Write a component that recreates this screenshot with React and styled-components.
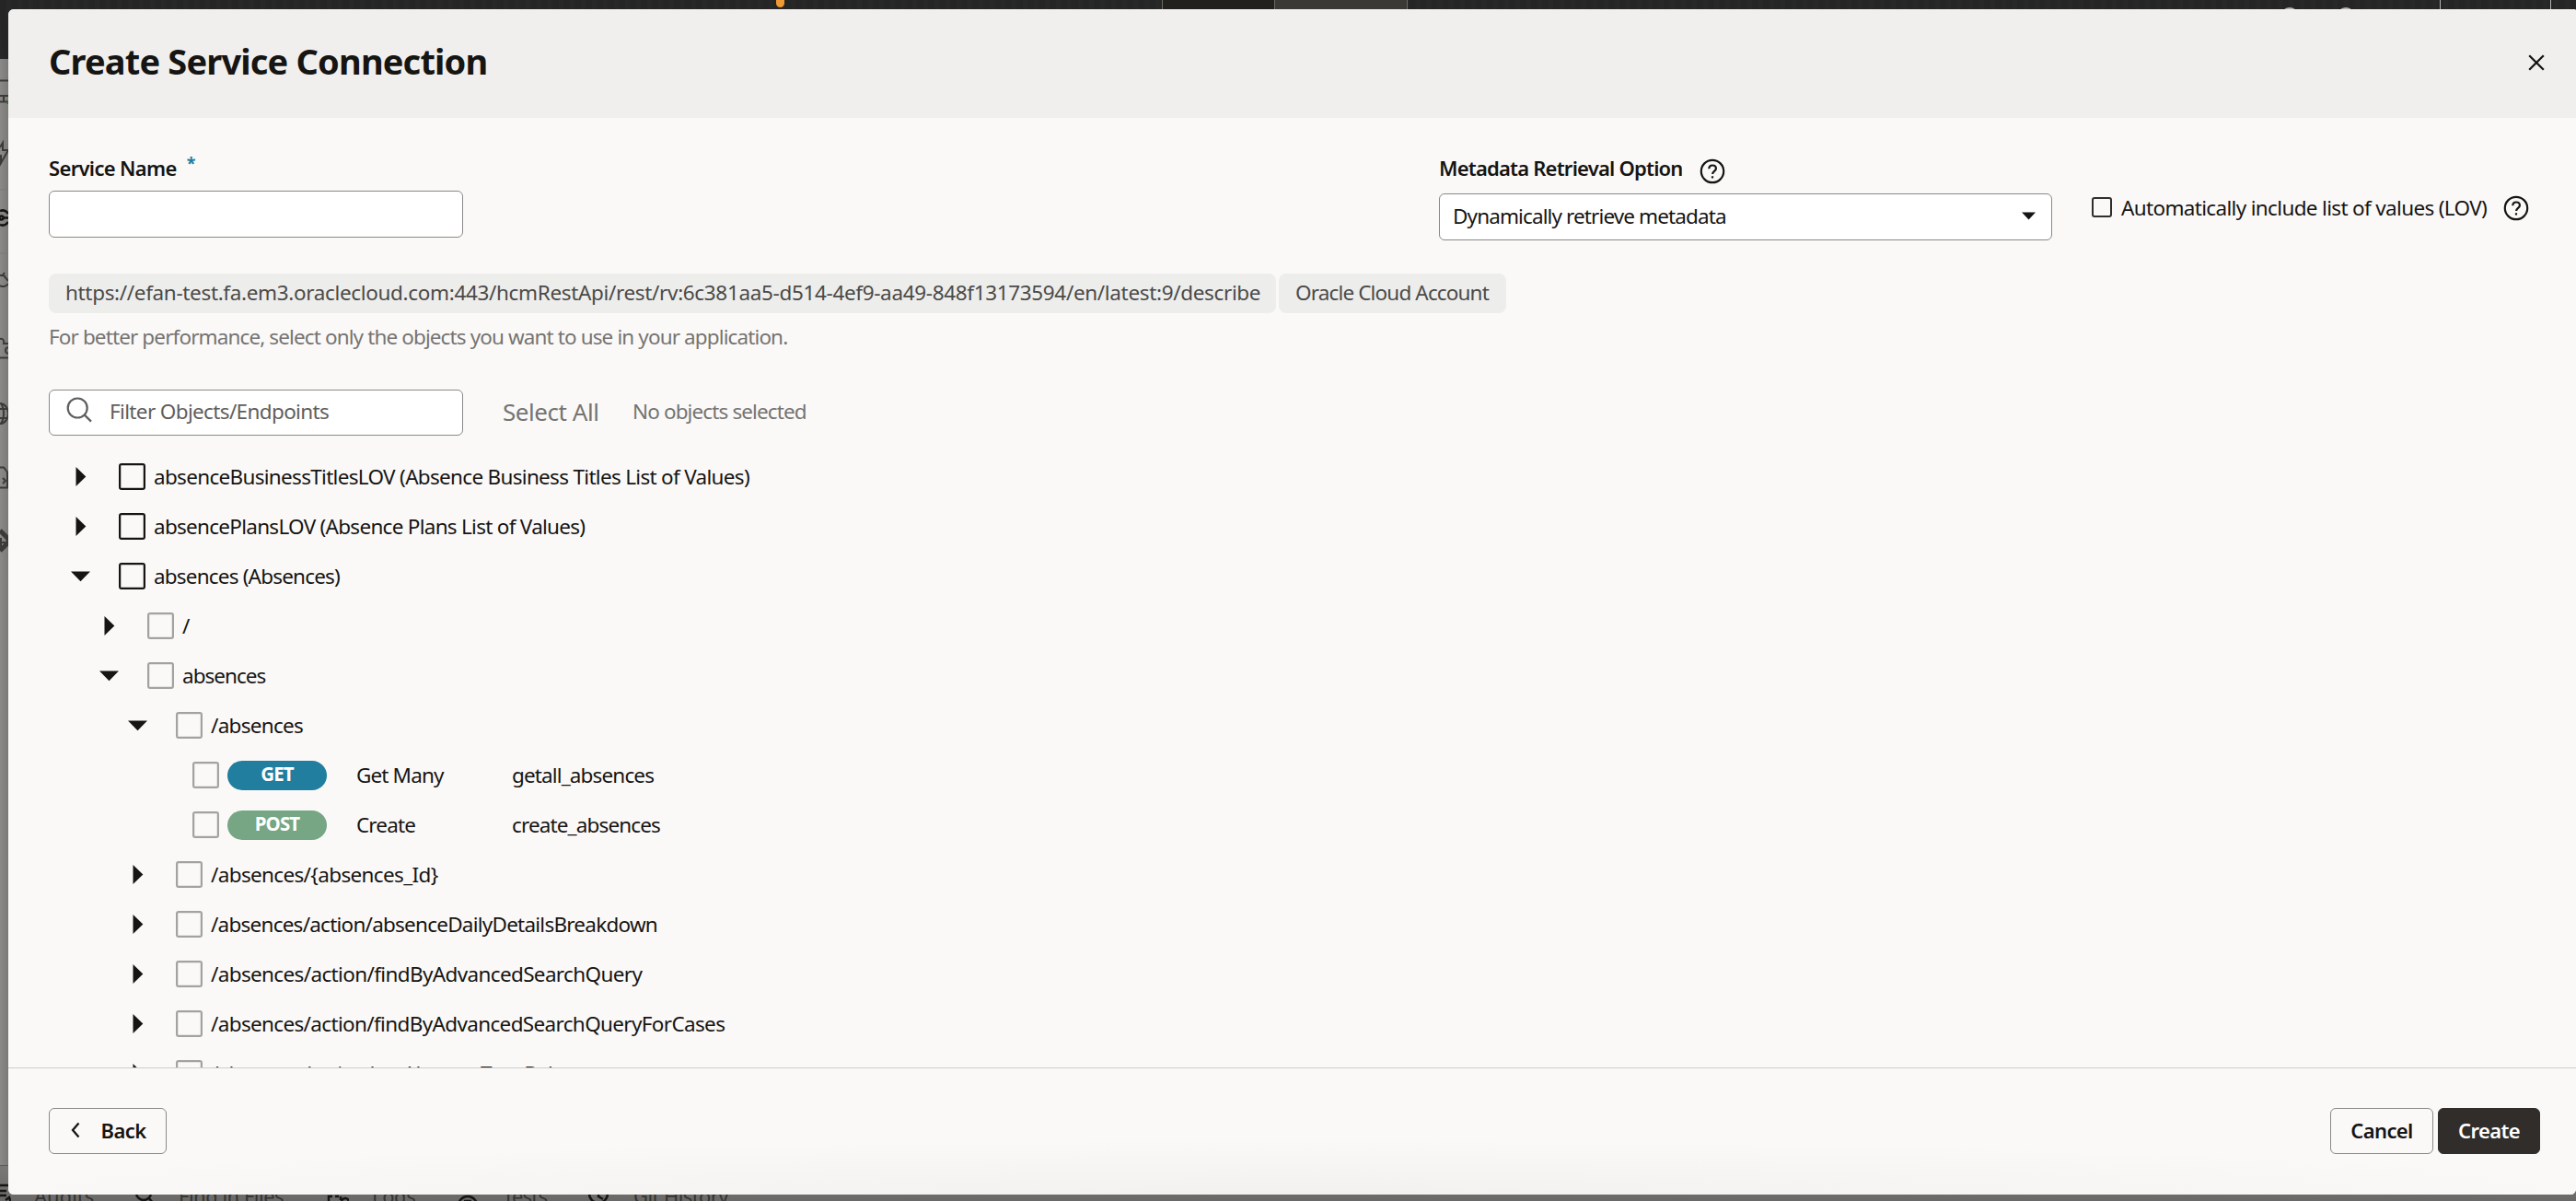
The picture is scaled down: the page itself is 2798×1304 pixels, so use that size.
import React from 'react';
import styled, { createGlobalStyle } from 'styled-components';

const GlobalStyle = createGlobalStyle`
  * {
    box-sizing: border-box;
  }

  body {
    margin: 0;
    font-family: 'Noto Sans', 'Open Sans', sans-serif;
    font-size: 22px;
    color: #161513;
  }
`;

const Page = styled.div`
  position: relative;
  width: 2798px;
  height: 1304px;
  overflow: hidden;
  display: grid;
  grid-template-rows: 64px 1fr 39px;
  background: #8a8886;
`;

/* application behind the dialog */

const TopBar = styled.div`
  display: flex;
  align-items: flex-start;
  background: repeating-radial-gradient(ellipse 60px 40px at 50% 0, #252525 0 6px, #282828 8px 12px);
`;

const TopBarGap = styled.div`
  width: ${props => props.$w}px;
`;

const StatusDot = styled.div`
  width: 9px;
  height: 14px;
  margin-top: -6px;
  border-radius: 5px;
  background: #f09a35;
`;

const TopBarTab = styled.div`
  width: ${props => props.$w}px;
  height: 64px;
  border-left: 1px solid ${props => props.$line || '#6b6a68'};
  background: ${props => props.$bg || 'transparent'};
`;

const TopBarIcon = styled.div`
  width: 20px;
  height: 20px;
  margin-top: 8px;
  border: 2px solid #b5b4b2;
  border-radius: 50%;
`;

const Rail = styled.div`
  width: 9px;
  background: linear-gradient(90deg, #8b8987, #7b7977);
  overflow: hidden;
`;

const BottomTabs = styled.div`
  display: flex;
  align-items: flex-start;
  padding-top: 17px;
  border-top: 1px solid #5c5a59;
  background: linear-gradient(#7a7876, #6b6967);
  color: #343331;
  line-height: 30px;
`;

const BottomTab = styled.div`
  display: flex;
  align-items: center;
  gap: ${props => props.$gap}px;
  width: ${props => props.$w}px;
  letter-spacing: ${props => props.$ls || 0}px;
  white-space: nowrap;
`;

/* dialog */

const Dialog = styled.div`
  position: absolute;
  top: 10px;
  left: 9px;
  width: 2789px;
  height: 1287px;
  display: flex;
  flex-direction: column;
  border-radius: 6px 2px 6px 6px;
  background: #fbf9f8;
  overflow: hidden;
`;

const Header = styled.div`
  display: flex;
  align-items: flex-start;
  justify-content: space-between;
  height: 118px;
  padding: 26px 34px 0 44px;
  background: #f0efed;
`;

const Title = styled.h1`
  margin: 0;
  font-size: 38px;
  line-height: 60px;
  font-weight: 700;
  letter-spacing: -0.83px;
`;

const CloseIcon = styled.svg`
  display: block;
  width: 18px;
  height: 18px;
  margin-top: 23px;
`;

const Body = styled.div`
  flex: 1;
  min-height: 0;
  padding: 42px 44px 0;
  overflow: hidden;
`;

const FormRow = styled.div`
  display: flex;
  align-items: flex-start;
  height: 127px;
`;

const Field = styled.div`
  width: ${props => props.$w}px;
  margin-right: ${props => props.$mr || 0}px;
`;

const LabelRow = styled.div`
  display: flex;
  align-items: flex-start;
  height: ${props => props.$h}px;
`;

const Label = styled.label`
  font-weight: 600;
  line-height: 25px;
  letter-spacing: ${props => props.$ls}px;
  white-space: nowrap;
`;

const Required = styled.span`
  margin-left: 11px;
  color: #227e9e;
  font-size: 18px;
  font-weight: 700;
  line-height: 15px;
`;

const TextInput = styled.input`
  display: block;
  width: 450px;
  height: 51px;
  border: 1px solid #8b8987;
  border-radius: 6px;
  background: #fff;
  outline: none;
`;

const SelectBox = styled.div`
  display: flex;
  align-items: center;
  justify-content: space-between;
  height: 51px;
  padding: 0 17px 3px 14px;
  border: 1px solid #8b8987;
  border-radius: 6px;
  background: #fff;
`;

const Text = styled.span`
  display: block;
  color: ${props => props.$color || '#161513'};
  font-size: ${props => props.$size || 22.5}px;
  letter-spacing: ${props => props.$ls}px;
  white-space: nowrap;
`;

const LovOption = styled.div`
  display: flex;
  align-items: center;
  height: 32px;
  margin-top: 39px;
`;

const SmallCheckbox = styled.span`
  width: 22px;
  height: 22px;
  margin: 0 10px 0 0;
  border: 2px solid #312d2a;
  border-radius: 3px;
`;

const Help = styled.svg`
  display: block;
  width: 28px;
  height: 28px;
  margin: 2px 0 0 ${props => props.$ml}px;
`;

const Chips = styled.div`
  display: flex;
  gap: 3px;
`;

const Chip = styled.div`
  display: flex;
  align-items: center;
  width: ${props => props.$w}px;
  height: 43px;
  padding: 0 0 3px 18px;
  border-radius: 8px;
  background: #ededec;
`;

const Hint = styled.div`
  height: 73px;
  margin-top: 10px;
  line-height: 32px;
`;

const Toolbar = styled.div`
  display: flex;
  align-items: center;
  height: 50px;
`;

const FilterBox = styled.div`
  display: flex;
  align-items: center;
  width: 450px;
  height: 50px;
  margin-right: 43px;
  padding: 0 0 3px 18px;
  border: 1px solid #8b8987;
  border-radius: 6px;
  background: #fff;
`;

const SearchIcon = styled.svg`
  width: 28px;
  height: 28px;
  margin: -3px 19px 0 0;
`;

const SelectAll = styled.div`
  width: 141px;
  padding-bottom: 3px;
`;

const SelectionCount = styled.div`
  padding-bottom: 3px;
`;

const Tree = styled.div`
  margin-top: 17px;
`;

const Row = styled.div`
  display: flex;
  align-items: center;
  height: 54px;
  padding-left: ${props => props.$indent}px;
`;

const Toggle = styled.svg`
  flex: none;
  width: 24px;
  height: 24px;
  margin-right: 30px;
`;

const Checkbox = styled.span`
  flex: none;
  width: 29px;
  height: 29px;
  margin-right: 9px;
  border: 2px solid ${props => (props.$muted ? '#a3a2a0' : '#161513')};
  border-radius: 3px;
  box-shadow: inset 0 0 0 0.5px ${props => (props.$muted ? '#cfcecc' : '#8b8987')};
`;

const Badge = styled.span`
  flex: none;
  width: 108px;
  height: 32px;
  margin: 1px 32px 0 0;
  border-radius: 16px;
  background: ${props => props.$bg};
  color: #fff;
  font-size: 20.5px;
  font-weight: 700;
  line-height: 29px;
  letter-spacing: ${props => props.$ls}px;
  text-align: center;
`;

const OperationName = styled.div`
  width: 169px;
`;

const Footer = styled.div`
  display: flex;
  align-items: flex-start;
  height: 138px;
  padding: 43px 39px 0 44px;
  border-top: 1px solid #cfcecc;
  background: radial-gradient(ellipse 1500px 60px at 50% 100%, #f2f1ef, #f2f1ef00) no-repeat, #fbf9f8;
`;

const Button = styled.button`
  display: flex;
  align-items: center;
  justify-content: center;
  width: ${props => props.$w}px;
  height: 50px;
  margin: 0 0 0 ${props => props.$ml || '0'};
  padding: 0 0 2px;
  border: 1px solid ${props => (props.$primary ? '#312d2a' : '#8b8987')};
  border-radius: 6px;
  background: ${props => (props.$primary ? '#312d2a' : 'transparent')};
  color: ${props => (props.$primary ? '#fff' : '#161513')};
  font-family: inherit;
  font-size: 22px;
  font-weight: 600;
  letter-spacing: ${props => props.$ls}px;
`;

const Chevron = styled.svg`
  width: 12px;
  height: 18px;
  margin-right: 22px;
`;

const HelpIcon = ({ ml }) => (
  <Help viewBox="0 0 28 28" fill="none" stroke="#161513" strokeWidth="2.2" $ml={ml}>
    <circle cx="14" cy="14" r="12.2" />
    <path d="M10.3 11.2c0-2.2 1.6-3.7 3.8-3.7s3.8 1.4 3.8 3.4c0 2.9-3.8 3-3.8 6.1" />
    <path d="M14 19.2v2.4" />
  </Help>
);

const TreeToggle = ({ open }) => (
  <Toggle viewBox="0 0 24 24" fill="#161513">
    {open ? <path d="M2 7.5h21L12.500 18.300z" /> : <path d="M7.500 2v21l10.800-10.500z" />}
  </Toggle>
);

const rows = [
  { level: 0, label: 'absenceBusinessTitlesLOV (Absence Business Titles List of Values)', ls: -0.69 },
  { level: 0, label: 'absencePlansLOV (Absence Plans List of Values)', ls: -0.72 },
  { level: 0, open: true, label: 'absences (Absences)', ls: -0.81 },
  { level: 1, label: '/', ls: 0 },
  { level: 1, open: true, label: 'absences', ls: -0.97 },
  { level: 2, open: true, label: '/absences', ls: -0.7 },
  { method: 'GET', color: '#227e9e', badgeLs: -0.9, name: 'Get Many', id: 'getall_absences', ls: -0.86 },
  { method: 'POST', color: '#76a684', badgeLs: -0.9, name: 'Create', id: 'create_absences', ls: -0.86 },
  { level: 2, label: '/absences/{absences_Id}', ls: -0.65 },
  { level: 2, label: '/absences/action/absenceDailyDetailsBreakdown', ls: -0.76 },
  { level: 2, label: '/absences/action/findByAdvancedSearchQuery', ls: -0.64 },
  { level: 2, label: '/absences/action/findByAdvancedSearchQueryForCases', ls: -0.65 },
  { level: 2, label: '/absences/action/getAbsenceTypeBalance', ls: -0.7 },
];

const TreeRow = ({ level, open, label, ls }) => (
  <Row $indent={22 + level * 31}>
    <TreeToggle open={open} />
    <Checkbox $muted={level > 0} />
    <Text $ls={ls}>{label}</Text>
  </Row>
);

const OperationRow = ({ method, color, badgeLs, name, id, ls }) => (
  <Row $indent={156}>
    <Checkbox $muted />
    <Badge $bg={color} $ls={badgeLs}>{method}</Badge>
    <OperationName>
      <Text $ls={ls}>{name}</Text>
    </OperationName>
    <Text $ls={ls}>{id}</Text>
  </Row>
);

const RailIcons = () => (
  <svg width="9" height="1201" viewBox="0 64 9 1201" fill="none" stroke="#3b3a38" strokeWidth="2">
    <path d="M0 87.500h9" />
    <path d="M0 104h9M0 110.500h9M4 104v6" />
    <path d="M8.500 109v4" stroke="#2f6b2f" />
    <path d="M0 160l3-5v8h6l-8 14v-9" />
    <path d="M0 206h9M0 275h9" stroke="#7b7977" strokeWidth="1" />
    <g stroke="#161513" strokeWidth="2.500">
      <path d="M0 229c4-1.500 7 0 9 3M0 244c4 1.500 7 0 9-3M3 236.500h6" />
      <circle cx="1.500" cy="236.500" r="2" />
    </g>
    <path d="M0 299l4 0 5 6M5 296l-3 4M0 310c3 2 7 1 9-2" />
    <path d="M0 368c3-1 5 2 4 5h5M9 377c-4 1-4 6 0 7M0 388.500h9" />
    <path d="M0 438c5 0 9 5 9 11s-4 11-9 11M0 444h8M0 454h8M1 438c4 6 4 16 0 22" />
    <path d="M0 507.500h4l4 5v17M0 529.500h9M3 519l3 3-3 3" />
    <path d="M0 576l9 9v4l-9 9" strokeWidth="5" />
    <path d="M1 584v10M1 589h5" />
  </svg>
);

const App = () => (
  <>
    <GlobalStyle />
    <Page>
      <TopBar>
        <TopBarGap $w={843} />
        <StatusDot />
        <TopBarGap $w={410} />
        <TopBarTab $w={122} $bg="#22211e" />
        <TopBarTab $w={144} $bg="#3a3936" />
        <TopBarTab $w={949} />
        <TopBarIcon />
        <TopBarGap $w={41} />
        <TopBarIcon />
        <TopBarGap $w={92} />
        <TopBarTab $w={120} $line="#b5b4b2" />
        <TopBarTab $w={28} $line="#b5b4b2" />
      </TopBar>
      <Rail>
        <RailIcons />
      </Rail>
      <BottomTabs>
        <BottomTab $w={146} $gap={25}>
          <svg width="12" height="30" fill="none" stroke="#161513" strokeWidth="2.500">
            <path d="M0 4h9M0 10h7M0 15h7M6 20l4-3 2 6" />
          </svg>
          Audits
        </BottomTab>
        <BottomTab $w={209} $gap={26} $ls={-0.5}>
          <svg width="22" height="30" fill="none" stroke="#161513" strokeWidth="2.500">
            <circle cx="10" cy="12" r="8" />
            <path d="M15 17l6 7" />
          </svg>
          Find in Files
        </BottomTab>
        <BottomTab $w={141} $gap={25} $ls={-0.4}>
          <svg width="24" height="30" fill="none" stroke="#161513" strokeWidth="2.500">
            <path d="M2 26V16h4M9 16h4M15 16v4" />
            <circle cx="20" cy="22" r="4" />
          </svg>
          Logs
        </BottomTab>
        <BottomTab $w={142} $gap={26} $ls={-0.8}>
          <svg width="24" height="30" fill="none" stroke="#161513" strokeWidth="2.500">
            <circle cx="12" cy="26" r="10" />
            <path d="M8 21h8" />
          </svg>
          Tests
        </BottomTab>
        <BottomTab $w={170} $gap={26} $ls={-0.6}>
          <svg width="24" height="30" fill="none" stroke="#161513" strokeWidth="2.500">
            <circle cx="12" cy="13" r="10" />
            <path d="M12 6v10l5 3" />
          </svg>
          Git History
        </BottomTab>
      </BottomTabs>

      <Dialog>
        <Header>
          <Title>Create Service Connection</Title>
          <CloseIcon viewBox="0 0 18 18" stroke="#161513" strokeWidth="2.300">
            <path d="M1.200 1.200l15.600 15.600M16.800 1.200L1.200 16.800" />
          </CloseIcon>
        </Header>

        <Body>
          <FormRow>
            <Field $w={450} $mr={1060}>
              <LabelRow $h={37}>
                <Label $ls={-0.67}>Service Name</Label>
                <Required>*</Required>
              </LabelRow>
              <TextInput />
            </Field>
            <Field $w={666} $mr={43}>
              <LabelRow $h={40}>
                <Label $ls={-0.78}>Metadata Retrieval Option</Label>
                <HelpIcon ml={18} />
              </LabelRow>
              <SelectBox>
                <Text $ls={-0.88}>Dynamically retrieve metadata</Text>
                <svg width="15" height="9" fill="#161513">
                  <path d="M0 0.500h15L7.500 8.500z" />
                </svg>
              </SelectBox>
            </Field>
            <LovOption>
              <SmallCheckbox />
              <Text $ls={-0.66}>Automatically include list of values (LOV)</Text>
              <HelpIcon ml={18} />
            </LovOption>
          </FormRow>

          <Chips>
            <Chip $w={1333}>
              <Text $color="#4b4a48" $ls={-0.34}>
                https://efan-test.fa.em3.oraclecloud.com:443/hcmRestApi/rest/rv:6c381aa5-d514-4ef9-aa49-848f13173594/en/latest:9/describe
              </Text>
            </Chip>
            <Chip $w={247}>
              <Text $color="#4b4a48" $ls={-0.85}>Oracle Cloud Account</Text>
            </Chip>
          </Chips>
          <Hint>
            <Text $color="#757472" $ls={-0.88}>
              For better performance, select only the objects you want to use in your application.
            </Text>
          </Hint>

          <Toolbar>
            <FilterBox>
              <SearchIcon viewBox="0 0 28 28" fill="none" stroke="#5f5e5c" strokeWidth="2.200">
                <circle cx="12.200" cy="12" r="10.500" />
                <path d="M19.600 19.400l7.400 7.200" />
              </SearchIcon>
              <Text $color="#5f5e5c" $ls={-0.64}>Filter Objects/Endpoints</Text>
            </FilterBox>
            <SelectAll>
              <Text $color="#757472" $size={26} $ls={-0.45}>Select All</Text>
            </SelectAll>
            <SelectionCount>
              <Text $color="#757472" $ls={-0.88}>No objects selected</Text>
            </SelectionCount>
          </Toolbar>

          <Tree>
            {rows.map((row, index) =>
              row.method ? <OperationRow key={index} {...row} /> : <TreeRow key={index} {...row} />
            )}
          </Tree>
        </Body>

        <Footer>
          <Button $w={128} $ls={-0.6}>
            <Chevron viewBox="0 0 12 18" fill="none" stroke="#161513" strokeWidth="2.300">
              <path d="M9.500 1.500L3 9l6.500 7.500" />
            </Chevron>
            Back
          </Button>
          <Button $w={112} $ml="auto" $ls={-0.6}>Cancel</Button>
          <Button $w={111} $ml="5px" $ls={-0.6} $primary>Create</Button>
        </Footer>
      </Dialog>
    </Page>
  </>
);

export default App;
